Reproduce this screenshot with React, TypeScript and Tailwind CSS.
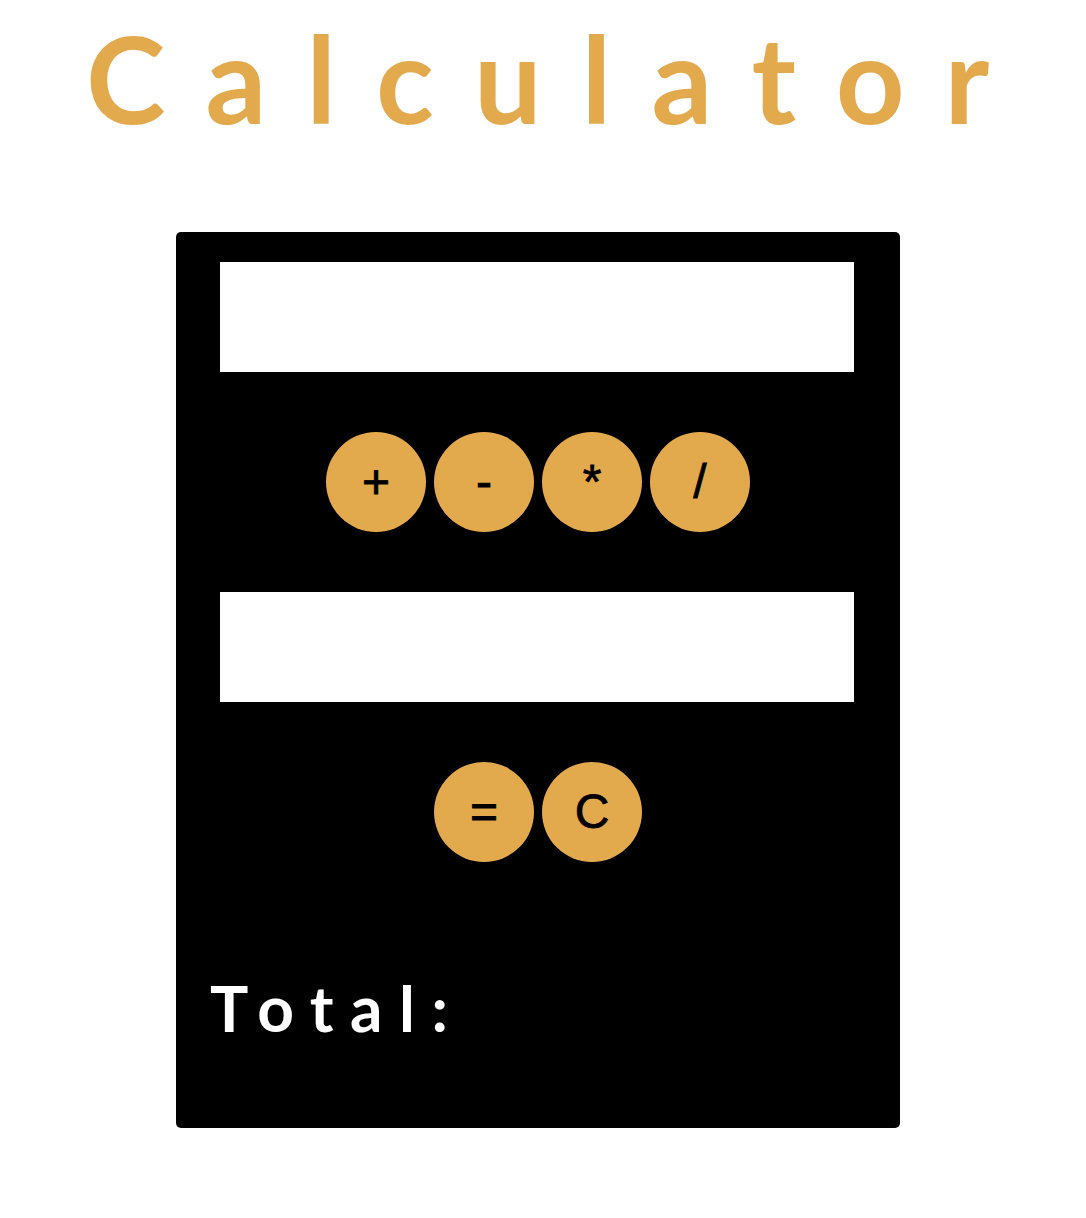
import { useState } from "react";

const ops = ["+", "-", "*", "/"];

function Circle({ label, onClick }: { label: string; onClick?: () => void }) {
    return (
        <button
            onClick={onClick}
            className="flex h-[100px] w-[100px] items-center justify-center rounded-full bg-[#e3aa4d] text-[48px] leading-none text-black [-webkit-text-stroke:0.8px_black] font-['Liberation_Sans',Arial,sans-serif]"
        >
            {label}
        </button>
    );
}

export default function App() {
    const [a, setA] = useState("");
    const [b, setB] = useState("");
    const [total, setTotal] = useState("");

    return (
        <div className="min-h-screen w-[1076px] bg-white font-['Century_Gothic',Lato,sans-serif]">
            <h1 className="pl-[86px] pt-[18px] text-[120px] font-bold leading-none tracking-[40px] text-[#e3aa4d]">
                Calculator
            </h1>

            <div className="ml-[176px] mt-[94px] flex w-[724px] flex-col rounded-[5px] bg-black pb-[88px] pl-[44px] pr-[46px] pt-[30px]">
                <input
                    value={a}
                    onChange={(e) => setA(e.target.value)}
                    className="h-[110px] w-[634px] border-0 bg-white outline-none"
                />

                <div className="my-[60px] flex justify-center gap-[8px] pl-[2px]">
                    {ops.map((op) => (
                        <Circle key={op} label={op} />
                    ))}
                </div>

                <input
                    value={b}
                    onChange={(e) => setB(e.target.value)}
                    className="h-[110px] w-[634px] border-0 bg-white outline-none"
                />

                <div className="mt-[60px] flex justify-center gap-[8px] pl-[2px]">
                    <Circle label="=" />
                    <Circle
                        label="C"
                        onClick={() => {
                            setA("");
                            setB("");
                            setTotal("");
                        }}
                    />
                </div>

                <p className="-ml-[10px] mt-[114px] text-[64px] font-bold leading-none tracking-[16.5px] text-white">
                    Total:{total}
                </p>
            </div>
        </div>
    );
}
